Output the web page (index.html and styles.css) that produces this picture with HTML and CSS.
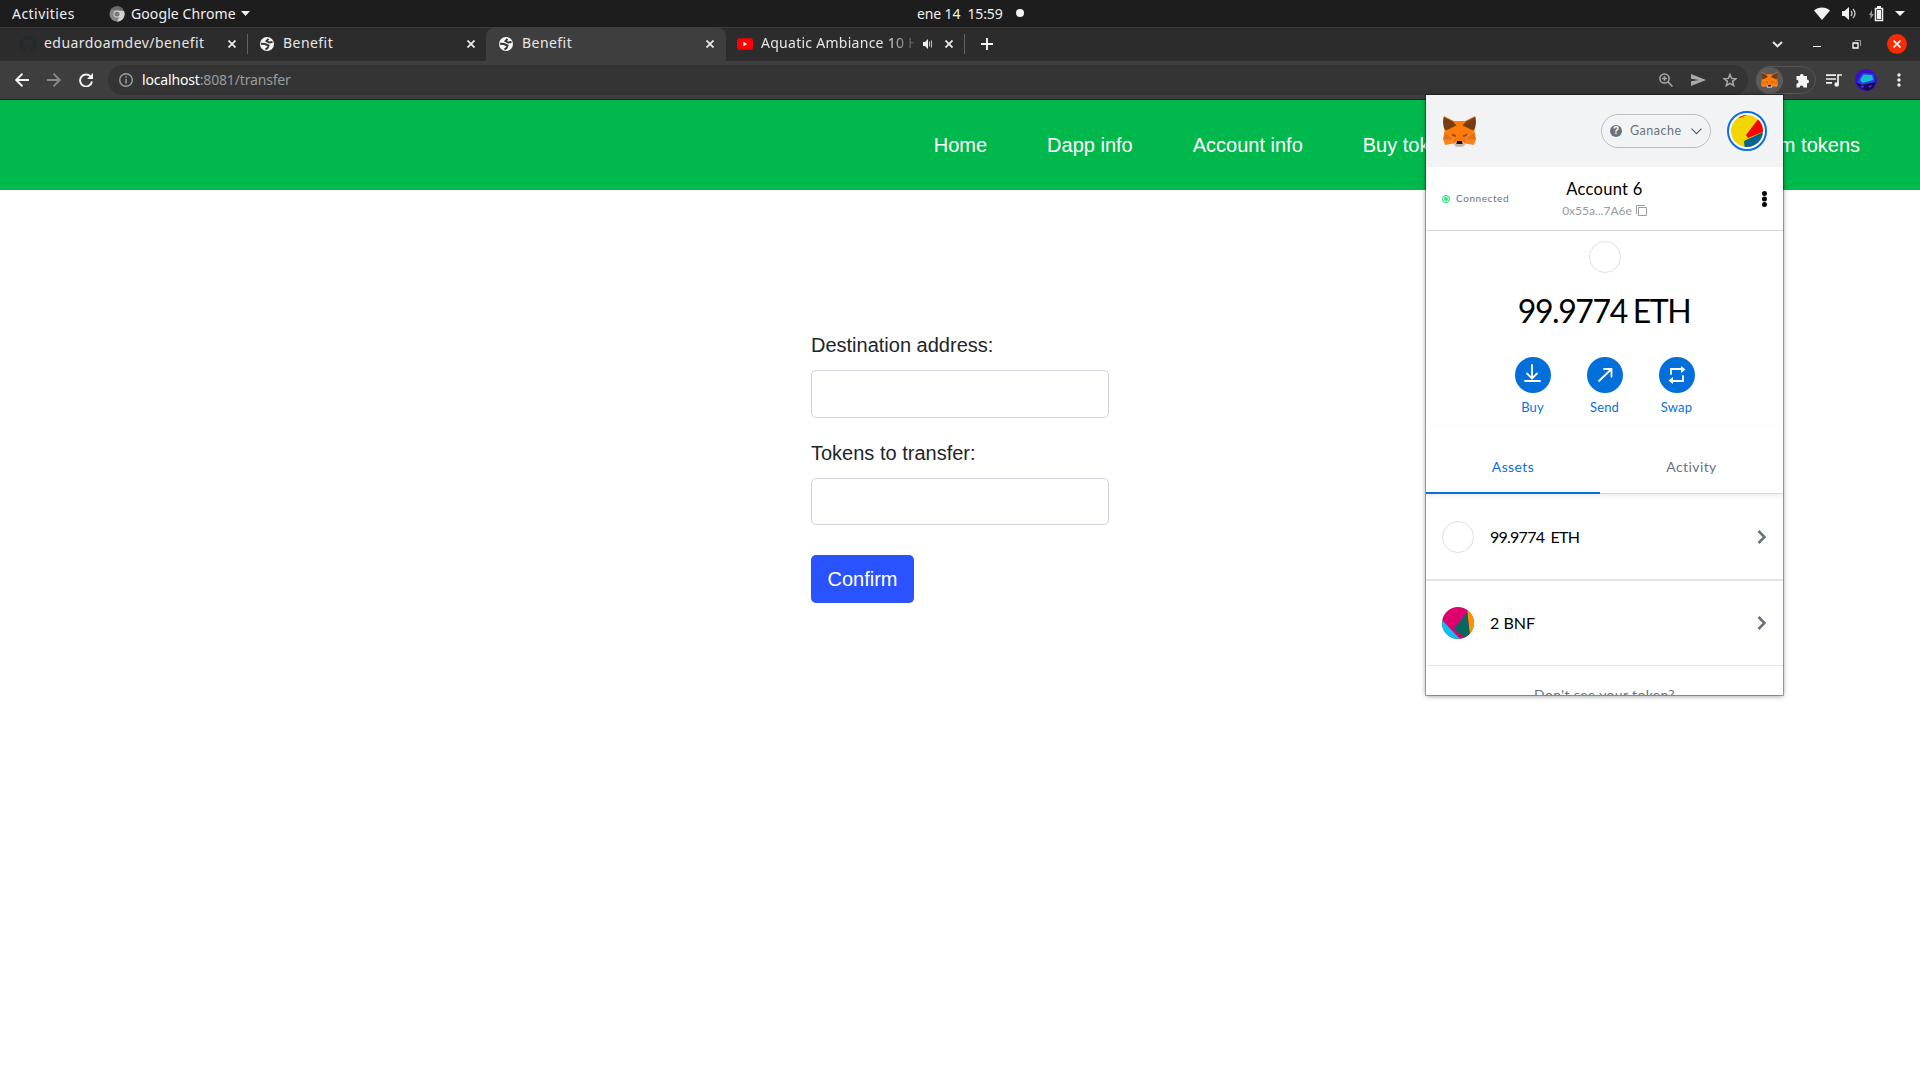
FILE: index.html
```html
<!DOCTYPE html>
<html lang="es">
<head>
<meta charset="utf-8">
<title>Benefit</title>
<link rel="stylesheet" href="styles.css">
</head>
<body>
<svg class="defs" width="0" height="0">
  <defs>
    <symbol id="fox" viewBox="0 0 33 31">
      <path fill="#d7c1b3" d="M9 25l3 5.500h9l3-5.500-6-4z"/>
      <path fill="#f6851b" d="M1 0l10 5h11L32 0l1 6-1.500 9L33 23l-2 6-8.500-1.500L20 25h-7l-2.500 2.500L2 29l-2-6 1.500-8L0 6z"/>
      <path fill="#ff7c0a" d="M11 5h11l8 11-8 6-3 4h-5l-3-4-8-6z"/>
      <path fill="#e2701b" d="M2 17l8 6-9.500.5zM31 17l-8 6 9.500.5zM12 21l1.500 4-3 2.500zM21 21l-1.500 4 3 2.500z"/>
      <path fill="#763d16" d="M.7.800L10 5.500l3.500 4L3 14.500 1 12 0 6zM32.300.800L23 5.500l-3.500 4L30 14.500l2-2.500 1-6z"/>
      <path fill="#8d4a2c" d="M8.500 17.500l4.500 1.800V21l-3.500-1zM24.500 17.500L20 19.300V21l3.500-1z"/>
      <path fill="#c0ad9e" d="M12 27.500l1.500 3h6l1.500-3-2 1h-5z"/>
      <path fill="#161616" d="M14 25h5l.7 3h-6.400z"/>
    </symbol>
    <symbol id="globe" viewBox="0 0 14 14">
      <circle cx="7" cy="7" r="7" fill="#f5f5f5"/>
      <path fill="none" stroke="#363636" stroke-width="2" d="M8.500 1.800L6.500 4 9 5.500l3.500-.5M1 6.800l4 .2L8.500 8.500 7.500 11l-2 1.500"/>
    </symbol>
    <symbol id="close" viewBox="0 0 8 8"><path d="M.5.500l7 7m0-7l-7 7" stroke="#eee" stroke-width="1.700"/></symbol>
    <symbol id="chevron" viewBox="0 0 9 14"><path d="M1.500 1l6 6-6 6" fill="none" stroke="#6a737d" stroke-width="2.600"/></symbol>
  </defs>
</svg>

<div class="desktop-bar">
  <span class="activities">Activities</span>
  <div class="app-menu">
    <svg width="16" height="16" viewBox="0 0 16 16"><circle cx="8" cy="8" r="7.500" fill="#858585"/><path d="M8 5h7a7.500 7.500 0 0 1-7 10.500l3-6z" fill="#d0d0d0"/><path d="M1.500 4a7.500 7.500 0 0 1 13 0H8z" fill="#6b6b6b"/><circle cx="8" cy="8" r="3.500" fill="#ddd"/><circle cx="8" cy="8" r="2.600" fill="#777"/></svg>
    <span>Google Chrome</span>
    <svg width="9" height="5" viewBox="0 0 9 5"><path d="M0 0h9L4.500 5z" fill="#f2f2f2"/></svg>
  </div>
  <div class="clock"><span>ene 14&nbsp; 15:59</span><i></i></div>
  <div class="tray">
    <svg width="16" height="13" viewBox="0 0 16 13"><path d="M0 3.500C4-.5 12-.5 16 3.500L8 13z" fill="#f2f2f2"/></svg>
    <svg class="volume" width="15" height="13" viewBox="0 0 15 13"><path d="M0 4h2.500L7 0v13L2.500 9H0z" fill="#f2f2f2"/><path d="M9 4q2 2.500 0 5M11 2q4 4.500 0 9" fill="none" stroke="#ccc" stroke-width="1.300"/></svg>
    <svg class="battery" width="15" height="16" viewBox="0 0 15 16"><path d="M3 4v4h2l-3.500 5V9H0z" fill="#999"/><path d="M6.500 2.500h7v12h-7z" fill="none" stroke="#f2f2f2" stroke-width="1.500"/><path d="M8 0h4v2H8zM8 4h4v9H8z" fill="#f2f2f2"/></svg>
    <svg width="10" height="5" viewBox="0 0 10 5"><path d="M0 0h10L5 5z" fill="#f2f2f2"/></svg>
  </div>
</div>

<div class="tabs">
  <div class="tab first">
    <svg width="16" height="16" viewBox="0 0 16 16"><path fill="#24292e" d="M8 0a8 8 0 0 0-2.500 15.600v-2.700C3 13.300 2.600 12 2.200 11.500l-.7-.6c1.500-.2 1.700 1.600 3.900 1.200l.4-.9C3.500 10.800 2.500 9.500 2.500 7.200c0-1 .3-1.700.8-2.300-.1-.6-.1-1.300.2-2 .8 0 1.500.4 2.200.9a8 8 0 0 1 4.600 0c.7-.5 1.400-.9 2.200-.9.3.7.3 1.400.2 2 .5.600.8 1.300.8 2.300 0 2.300-1 3.600-3.300 4 .3.400.4.900.4 1.500v2.900A8 8 0 0 0 8 0z"/></svg>
    <span class="tab-title">eduardoamdev/benefit</span>
    <svg class="x" width="8" height="8"><use href="#close"/></svg>
  </div>
  <div class="tab second">
    <svg width="14" height="14"><use href="#globe"/></svg>
    <span class="tab-title">Benefit</span>
    <svg class="x" width="8" height="8"><use href="#close"/></svg>
  </div>
  <div class="tab active">
    <svg width="14" height="14"><use href="#globe"/></svg>
    <span class="tab-title">Benefit</span>
    <svg class="x" width="8" height="8"><use href="#close"/></svg>
  </div>
  <div class="tab fourth">
    <svg width="16" height="12" viewBox="0 0 15 11"><rect width="15" height="11" rx="2.500" fill="#f00"/><path d="M6 3.300v4.400l3.500-2.200z" fill="#fff"/></svg>
    <span class="tab-title fade">Aquatic Ambiance 10 H</span>
    <svg class="sound" width="10" height="10" viewBox="0 0 10 10"><path d="M0 3h2l3-3v10L2 7H0z" fill="#eee"/><path d="M6.500 2.500v5M8.500 1.500v7" stroke="#bbb" stroke-width="1.100"/></svg>
    <svg class="x" width="8" height="8"><use href="#close"/></svg>
  </div>
  <svg class="plus" width="12" height="12" viewBox="0 0 12 12"><path d="M6 0v12M0 6h12" stroke="#f5f5f5" stroke-width="1.900"/></svg>
  <div class="window-controls">
    <svg width="11" height="7" viewBox="0 0 11 7"><path d="M1 1l4.500 4.300L10 1" fill="none" stroke="#e4e4e4" stroke-width="2"/></svg>
    <svg class="minimize" width="8" height="2"><path d="M0 .5h8" stroke="#fff"/></svg>
    <svg class="restore" width="9" height="9" viewBox="0 0 9 9"><path d="M1 3h5v5H1z" fill="none" stroke="#fff" stroke-width="1.300"/><path d="M3 .5h5.500V6" fill="none" stroke="#999"/></svg>
    <div class="window-close"><svg width="8" height="8"><use href="#close"/></svg></div>
  </div>
</div>

<div class="toolbar">
  <div class="nav-buttons">
    <svg width="14" height="14" viewBox="0 0 14 14"><path d="M14 7H1.500M7.500.700L1.200 7l6.300 6.300" fill="none" stroke="#f5f5f5" stroke-width="1.900"/></svg>
    <svg width="14" height="14" viewBox="0 0 14 14"><path d="M0 7h12.500M6.500.700L12.800 7l-6.300 6.300" fill="none" stroke="#8a8a8a" stroke-width="1.800"/></svg>
    <svg width="14" height="14" viewBox="0 0 14 14"><path d="M12 4A6 6 0 1 0 13 8.500" fill="none" stroke="#f5f5f5" stroke-width="1.900"/><path d="M14 0v6H8z" fill="#f5f5f5"/></svg>
  </div>
  <div class="omnibox">
    <svg width="14" height="14" viewBox="0 0 14 14"><circle cx="7" cy="7" r="6.300" fill="none" stroke="#9aa0a6" stroke-width="1.400"/><path d="M7 6v4.500M7 3.300v1.500" stroke="#9aa0a6" stroke-width="1.500"/></svg>
    <span class="url"><b>localhost</b>:8081/transfer</span>
    <div class="box-actions">
      <svg width="14" height="14" viewBox="0 0 14 14"><circle cx="5.500" cy="5.500" r="4.600" fill="none" stroke="#aaa" stroke-width="1.500"/><path d="M9 9l4.500 4.500M5.500 3.200v4.600M3.200 5.500h4.600" stroke="#aaa" stroke-width="1.500"/></svg>
      <svg width="15" height="12" viewBox="0 0 15 12"><path d="M0 0l15 6L0 12V7.300L8 6 0 4.700z" fill="#aaa"/></svg>
      <svg width="14" height="14" viewBox="0 0 14 14"><path d="M7 1.500l1.600 3.900 4.300.3-3.300 2.700 1.100 4.200L7 10.300l-3.700 2.300 1.100-4.200L1.100 5.700l4.300-.3z" fill="none" stroke="#aaa" stroke-width="1.500"/></svg>
    </div>
  </div>
  <div class="extensions">
    <div class="fox-button"><svg width="17" height="16"><use href="#fox"/></svg></div>
    <svg width="15" height="15" viewBox="0 0 15 15"><path fill="#f5f5f5" d="M1.500 3h3.300a2 2 0 1 1 4 0H12v3.500a2 2 0 1 1 0 4V14.500H8.500a2 2 0 0 0-4 0h-3V10.700a2 2 0 0 0 0-4z"/></svg>
  </div>
  <svg class="playlist" width="16" height="13" viewBox="0 0 16 13"><path d="M0 1.200h10M0 5h10M0 8.800h6" stroke="#f0f0f0" stroke-width="1.700"/><path d="M12 10V1h4" fill="none" stroke="#f0f0f0" stroke-width="1.700"/><circle cx="10.700" cy="10.500" r="2.300" fill="#f0f0f0"/></svg>
  <svg class="profile" width="22" height="22" viewBox="0 0 22 22"><circle cx="11" cy="11" r="11" fill="#3a0fc4"/><path d="M1 14l5 1 11-1 4-1-3 6-5 3-6-2z" fill="#170a4c"/><path d="M2 13l5-9 12 1 1 8-13 3z" fill="#2e35e8"/><path d="M5 11l3.500-5.500 8.500.5 1.500 5-11 3z" fill="#14bcd0"/><path d="M5 17l4-.5-1 3zM13 17l4-1-2 3z" fill="#5a2be8"/></svg>
  <svg class="dots" width="4" height="14" viewBox="0 0 4 14"><path d="M2 2h.01M2 7h.01M2 12h.01" stroke="#eee" stroke-width="3.400" stroke-linecap="round"/></svg>
</div>

<nav class="site-nav">
  <a>Home</a><a>Dapp info</a><a>Account info</a><a>Buy tokens</a><a>Transfer tokens</a><a>Redeem tokens</a>
</nav>

<main class="page">
  <form class="form">
    <label for="dest">Destination address:</label>
    <input id="dest" type="text">
    <label for="amount">Tokens to transfer:</label>
    <input id="amount" class="amount" type="text">
    <button type="button">Confirm</button>
  </form>
</main>

<aside class="wallet">
  <header class="wallet-head">
    <svg width="33" height="31" viewBox="0 0 33 31"><use href="#fox" width="33" height="31"/></svg>
    <div class="network"><i>?</i><span>Ganache</span><svg width="11" height="7" viewBox="0 0 11 7"><path d="M.5.700l5 5 5-5" fill="none" stroke="#586069" stroke-width="1.200"/></svg></div>
    <svg class="identicon" width="40" height="40" viewBox="0 0 40 40"><circle cx="20" cy="20" r="19" fill="#fff" stroke="#0a6fdc" stroke-width="2"/><clipPath id="ic"><circle cx="20" cy="20" r="16"/></clipPath><g clip-path="url(#ic)"><path fill="#f3d500" d="M0 0h40v40H0z"/><path fill="#fa0200" d="M32 7L19 24l2 3 19-8V6zM10 5l8-2 2 1-8 3z"/><path fill="#036690" d="M17 30l23-11v21H18z"/></g></svg>
  </header>
  <section class="account">
    <div class="connected"><i></i><span>Connected</span></div>
    <div class="account-id"><strong>Account 6</strong><div class="address"><span>0x55a...7A6e</span><svg width="11" height="11" viewBox="0 0 11 11"><path d="M2.500 2.500h8v8h-8zM.5 9V.500H9" fill="none" stroke="#9a9ca0"/></svg></div></div>
    <svg class="menu" width="5" height="16" viewBox="0 0 5 16"><path d="M2.500 2.500h.01M2.500 8h.01M2.500 13.500h.01" stroke="#000" stroke-width="5" stroke-linecap="round"/></svg>
  </section>
  <section class="balance">
    <div class="token-ring"></div>
    <div class="amount-eth">99.9774 ETH</div>
    <div class="actions">
      <div class="action"><svg width="36" height="36" viewBox="0 0 36 36"><circle cx="18" cy="18" r="18"/><path d="M17 8v13M12 16.500l5 5 5-5M10 24h15"/></svg><span>Buy</span></div>
      <div class="action"><svg width="36" height="36" viewBox="0 0 36 36"><circle cx="18" cy="18" r="18"/><path d="M12 24l12.500-12M17 12h7.500v7.500"/></svg><span>Send</span></div>
      <div class="action"><svg width="36" height="36" viewBox="0 0 36 36"><circle cx="18" cy="18" r="18"/><path d="M12 17v-5h11M24 19v5H13"/><path class="tips" d="M22 9l4.500 3.500L22 16zM14 20l-4.500 3.500L14 27z"/></svg><span>Swap</span></div>
    </div>
  </section>
  <div class="wallet-tabs"><div class="selected">Assets</div><div>Activity</div></div>
  <div class="asset"><div class="token-ring"></div><span class="eth-name">99.9774 ETH</span><svg width="9" height="14"><use href="#chevron"/></svg></div>
  <div class="asset bnf"><svg width="32" height="32" viewBox="0 0 32 32"><clipPath id="tc"><circle cx="16" cy="16" r="16"/></clipPath><g clip-path="url(#tc)"><path fill="#df0070" d="M0 0h32v32H0z"/><path fill="#04c4f4" d="M0 13l18 19H0z"/><path fill="#fc9400" d="M25 0h7v32h-4z"/><path fill="#05675d" d="M25 5L12 22l12 10 4-4z"/></g></svg><span>2 BNF</span><svg width="9" height="14"><use href="#chevron"/></svg></div>
  <p class="missing">Don't see your token?</p>
</aside>
</body>
</html>
```
FILE: styles.css
```css
* { box-sizing: border-box; }
body { margin: 0; height: 1080px; overflow: hidden; background: #fff; position: relative; font-family: "Liberation Sans", Arial, sans-serif; }
svg { display: block; flex: none; }
.defs { position: absolute; }
.desktop-bar { height: 27px; background: #1d1d1d; color: #f0f0f0; display: grid; grid-template-columns: 109px 808px 1fr auto; align-items: center; font: 14px/27px "Noto Sans", sans-serif; white-space: nowrap; }
.activities { padding-left: 12px; letter-spacing: .45px; }
.app-menu, .clock, .tray { display: flex; align-items: center; }
.app-menu span { margin: 0 5px 0 6px; letter-spacing: .1px; }
.clock { letter-spacing: -.12px; line-height: 25px; height: 26px; align-self: start; }
.clock i { width: 8px; height: 8px; border-radius: 50%; background: #f5f5f5; margin-left: 13px; }
.tray { padding-right: 15px; }
.volume { margin-left: 12px; }
.battery { margin: 0 11px 0 12px; }

.tabs { height: 34px; background: #2c2c2c; border-top: 1px solid #3c3c3c; display: flex; align-items: center; font: 14px/28px "Noto Sans", sans-serif; color: #e6e6e6; }
.tab { height: 33px; display: flex; align-items: center; position: relative; padding-bottom: 1px; }
.tab-title { margin-left: 9px; padding-bottom: 2px; white-space: nowrap; overflow: hidden; letter-spacing: .45px; }
.tab .x { margin-left: auto; }
.first { width: 248px; padding-left: 20px; padding-right: 12px; }
.first .tab-title { margin-left: 8px; }
.first::after, .fourth::after { content: ""; width: 1px; height: 20px; background: #626262; position: absolute; right: 0; top: 6px; }
.second { width: 238px; padding-left: 12px; padding-right: 11px; }
.active { width: 240px; padding-left: 13px; padding-right: 12px; background: #3e3e3e; border-radius: 8px 8px 0 0; }
.fourth { width: 239px; padding-left: 11px; padding-right: 12px; }
.tab .fade { width: 153px; margin-left: 8px; letter-spacing: .27px; -webkit-mask-image: linear-gradient(90deg, #000 82%, transparent 104%); mask-image: linear-gradient(90deg, #000 82%, transparent 104%); }
.sound { margin-left: 9px; }
.plus { margin: 0 0 1px 16px; }
.window-controls { display: flex; align-items: center; margin-left: auto; padding: 0 13px 1px 0; }
.minimize { margin: 5px 31px 0 30px; }
.restore { margin-right: 26px; }
.window-close { width: 20px; height: 20px; border-radius: 50%; background: #f52c06; display: grid; place-items: center; }

.toolbar { height: 39px; background: #3e3e3e; border-bottom: 1px solid #252525; display: flex; align-items: center; padding-left: 15px; }
.nav-buttons { display: flex; gap: 18px; width: 93px; }
.omnibox { width: 1640px; height: 30px; border-radius: 15px; background: #343434; display: flex; align-items: center; padding: 0 11px; }
.url { margin-left: 9px; font: 14px/30px "Noto Sans", sans-serif; letter-spacing: -.16px; color: #9b9b9b; }
.url b { font-weight: 400; color: #fff; }
.box-actions { margin-left: auto; display: flex; align-items: center; gap: 17.5px; }
.extensions { width: 60px; height: 28px; margin-left: 8px; border: 1px solid #555; border-radius: 14px; display: flex; align-items: center; gap: 12px; }
.fox-button { width: 27px; height: 27px; margin-left: -1px; border-radius: 50%; background: #5a5a5a; display: grid; place-items: center; }
.playlist { margin-left: 10px; }
.profile { margin-left: 13px; }
.dots { margin-left: 20px; }

.site-nav { height: 90px; background: #01b84c; color: #fff; display: flex; align-items: center; justify-content: flex-end; gap: 60px; padding-right: 60px; font-size: 20px; white-space: nowrap; }
.page { display: flex; justify-content: center; padding-top: 140px; }
.form { width: 298px; display: flex; flex-direction: column; align-items: flex-start; color: #212529; font-size: 20px; line-height: 30px; }
.form input { width: 298px; height: 48px; margin: 10px 0 20px; border: 1px solid #ced4da; border-radius: 5px; font-size: 20px; }
.form .amount { height: 47px; margin-bottom: 30px; }
.form button { width: 103px; height: 48px; border: 0; border-radius: 5px; background: #2b52ff; color: #fff; font: 20px "Liberation Sans", Arial, sans-serif; }

.wallet { position: absolute; left: 1426px; top: 95px; width: 357px; height: 600px; overflow: hidden; background: #fff; font-family: Lato, sans-serif; box-shadow: 0 0 0 1px rgba(0,0,0,.28), 0 1px 5px rgba(0,0,0,.45); }
.wallet-head { height: 72px; background: #f2f3f4; display: flex; align-items: center; padding: 0 16px; }
.wallet-head > svg:first-child { margin-left: 1px; }
.network { width: 110px; height: 34px; margin: 0 16px 0 auto; border: 1px solid #bbc0c5; border-radius: 17px; display: flex; align-items: center; color: #6a737d; font-size: 12.5px; line-height: 16px; letter-spacing: .5px; padding: 0 8px; }
.network span { padding-bottom: 1px; }
.network i { width: 12px; height: 12px; border-radius: 50%; background: #6a737d; color: #fff; font: bold 10px/12px "Liberation Sans", sans-serif; letter-spacing: 0; text-align: center; margin-right: 8px; }
.network svg { margin-left: auto; }
.account { height: 64px; border-bottom: 1px solid #d6d9dc; display: grid; grid-template-columns: 1fr auto 1fr; align-items: center; padding: 0 16px; }
.connected { display: flex; align-items: center; color: #6a737d; font-size: 10px; line-height: 12px; letter-spacing: .58px; }
.connected span { padding-bottom: 2px; }
.connected i { width: 8px; height: 8px; border: 1px solid #29e67e; border-radius: 50%; background: #29e67e; box-shadow: inset 0 0 0 1px #fff; margin-right: 6px; }
.account-id { text-align: center; padding-top: 2px; }
.account-id strong { display: block; font-size: 16.5px; font-weight: 400; line-height: 22px; letter-spacing: .3px; }
.address { display: flex; align-items: center; gap: 4px; color: #989a9d; font-size: 12px; line-height: 22px; }
.menu { justify-self: end; }
.balance { height: 194px; padding-top: 10px; display: flex; flex-direction: column; align-items: center; }
.token-ring { width: 32px; height: 32px; border: 1px solid #e0e0e0; border-radius: 50%; flex: none; }
.amount-eth { font-size: 32px; line-height: 44px; margin-top: 16px; white-space: nowrap; letter-spacing: -1.4px; word-spacing: -1px; padding-right: 1px; }
.actions { display: flex; gap: 36px; margin-top: 24px; }
.action { width: 36px; display: flex; flex-direction: column; align-items: center; color: #0a6fdc; font-size: 13px; line-height: 28px; letter-spacing: .15px; }
.action circle { fill: #036fdb; }
.action path { fill: none; stroke: #fff; stroke-width: 1.8; stroke-linecap: round; }
.action .tips { fill: #fff; stroke: none; }
.wallet-tabs { height: 69px; display: grid; grid-template-columns: 174px 1fr; font-size: 14px; line-height: 84px; letter-spacing: .4px; text-align: center; color: #6a737d; border-bottom: 1px solid #d6d9dc; box-shadow: 0 2px 5px rgba(0,0,0,.08); }
.wallet-tabs .selected { color: #0a6fdc; border-bottom: 2px solid #0a6fdc; height: 69px; }
.asset { height: 87px; display: flex; align-items: center; padding: 0 17px 0 16px; border-bottom: 2px solid #e2e3e4; font-size: 16px; }
.bnf { height: 85px; border-bottom-width: 1px; }
.asset span { margin-left: 16px; }
.bnf span { padding-bottom: 2px; }
.asset .eth-name { letter-spacing: -.75px; word-spacing: 3px; }
.asset svg:last-child { margin-left: auto; }
.missing { margin: 17px 0 0; text-align: center; font-size: 14px; line-height: 24px; letter-spacing: .35px; color: #6a737d; }
```
